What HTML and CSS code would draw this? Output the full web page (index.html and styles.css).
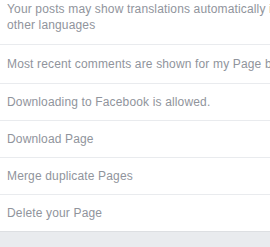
FILE: index.html
```html
<!DOCTYPE html>
<html lang="en">
<head>
    <meta charset="UTF-8">
    <title>Page settings</title>
    <link rel="stylesheet" href="styles.css">
</head>
<body>
    <main class="panel">
        <div class="row row-first">Your posts may show translations automatically into other languages</div>
        <div class="row row-wide">Most recent comments are shown for my Page by default.</div>
        <div class="row">Downloading to Facebook is allowed.</div>
        <div class="row">Download Page</div>
        <div class="row">Merge duplicate Pages</div>
        <div class="row">Delete your Page</div>
    </main>
</body>
</html>
```

FILE: styles.css
```css
* {
    margin: 0;
    padding: 0;
    box-sizing: border-box;
}

body {
    width: 270px;
    height: 247px;
    overflow: hidden;
    background: #e9ebee;
    font-family: "Liberation Sans", Arial, sans-serif;
    font-size: 12px;
    line-height: 16px;
    letter-spacing: 0.15px;
    color: #90949c;
}

.panel {
    width: 320px;
    background: #fff;
    border-bottom: 1px solid #dddfe2;
}

.row {
    padding: 10px 7px;
    border-bottom: 1px solid #e9ebee;
}

.row:last-child {
    border-bottom: none;
}

.row-first {
    padding-top: 1px;
    padding-bottom: 11px;
}

.row-wide {
    white-space: nowrap;
    padding-top: 11px;
    padding-bottom: 11px;
}
```
